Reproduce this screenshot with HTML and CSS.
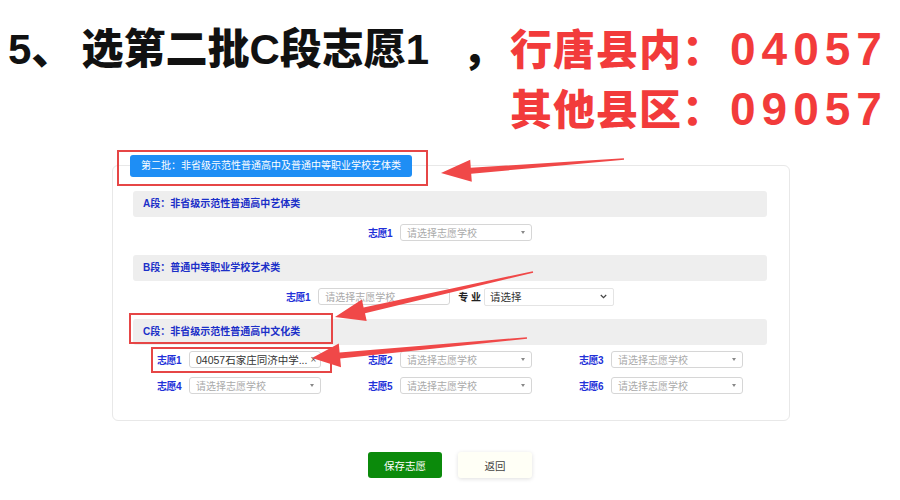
FILE: index.html
```html
<!DOCTYPE html>
<html lang="zh-CN">
<head>
    <meta charset="UTF-8">
    <title>选第二批C段志愿</title>
    <link rel="stylesheet" href="styles.css">
</head>
<body>
    <!-- Step heading -->
    <div class="title">
        <span class="title-lead">5<span class="sep">、</span>选第二批C段志愿1<span class="comma">，</span></span>
        <span class="title-codes">
            <span class="code-line">行唐县内：<span class="num">04057</span></span>
            <span class="code-line">其他县区：<span class="num">09057</span></span>
        </span>
    </div>

    <!-- Volunteer form panel -->
    <div class="panel">
        <div class="batch-tab">第二批：非省级示范性普通高中及普通中等职业学校艺体类</div>

        <div class="seg">
            <div class="seg-head">A段：非省级示范性普通高中艺体类</div>
            <div class="seg-row">
                <span class="pick-label">志愿1</span>
                <div class="pick">请选择志愿学校</div>
            </div>
        </div>

        <div class="seg">
            <div class="seg-head">B段：普通中等职业学校艺术类</div>
            <div class="seg-row">
                <span class="pick-label">志愿1</span>
                <div class="pick plain">请选择志愿学校</div>
                <span class="field-label">专 业</span>
                <div class="major">
                    请选择
                    <svg width="7" height="5" viewBox="0 0 7 5"><polyline points="0.8,1 3.5,3.7 6.2,1" fill="none" stroke="#444" stroke-width="1.2"/></svg>
                </div>
            </div>
        </div>

        <div class="seg">
            <div class="seg-head">C段：非省级示范性普通高中文化类</div>
            <div class="choice-grid">
                <div class="choice"><span class="pick-label">志愿1</span><div class="pick chosen">04057石家庄同济中学...<span class="clear">×</span></div></div>
                <div class="choice"><span class="pick-label">志愿2</span><div class="pick">请选择志愿学校</div></div>
                <div class="choice"><span class="pick-label">志愿3</span><div class="pick">请选择志愿学校</div></div>
                <div class="choice"><span class="pick-label">志愿4</span><div class="pick">请选择志愿学校</div></div>
                <div class="choice"><span class="pick-label">志愿5</span><div class="pick">请选择志愿学校</div></div>
                <div class="choice"><span class="pick-label">志愿6</span><div class="pick">请选择志愿学校</div></div>
            </div>
        </div>
    </div>

    <div class="actions">
        <button class="btn btn-save">保存志愿</button>
        <button class="btn btn-back">返回</button>
    </div>

    <!-- Annotation marks drawn over the screenshot -->
    <svg class="marks" width="900" height="500" viewBox="0 0 900 500">
        <rect x="118" y="151" width="309" height="34" fill="none" stroke="#e64646" stroke-width="2"/>
        <rect x="130" y="314" width="202" height="29" fill="none" stroke="#e64646" stroke-width="2"/>
        <rect x="152" y="348" width="179" height="24" fill="none" stroke="#e64646" stroke-width="2"/>
        <polygon points="441,173 471.8,181.7 471.2,173.7 624.1,159.8 623.9,158.2 470.8,167.7 470.2,159.7" fill="#f04848"/>
        <polygon points="335,317 366.7,321 365,313.2 533.2,272.8 532.8,271.2 363.6,307.4 361.9,299.6" fill="#f04848"/>
        <polygon points="312,358 341,367.3 340.2,358.4 527.1,338.8 526.9,337.2 339.6,352.4 338.8,343.5" fill="#f04848"/>
    </svg>
</body>
</html>
```

FILE: styles.css
```css
/* General styling */
* {
    box-sizing: border-box;
}

body {
    margin: 0;
    width: 900px;
    height: 500px;
    overflow: hidden;
    position: relative;
    background: #fff;
    font-family: "Liberation Sans", "Noto Sans CJK SC", sans-serif;
}

/* Heading */
.title {
    display: flex;
    height: 138px;
    padding: 20px 0 0 8px;
    font-size: 42px;
    font-weight: 900;
    line-height: 59px;
}

.title-lead {
    width: 502px;
    color: #111;
    white-space: nowrap;
}

.title-lead .sep {
    margin-right: 8px;
}

.title-lead .comma {
    margin-left: 33px;
}

.title-codes {
    display: flex;
    flex-direction: column;
    color: #f23b3b;
    letter-spacing: 1px;
    white-space: nowrap;
}

.num {
    font-size: 46px;
    letter-spacing: 6px;
    margin-left: 5px;
}

/* Panel */
.panel {
    display: flex;
    flex-direction: column;
    margin: 27px 110px 0 112px;
    padding: 0 22px 26px 20px;
    border: 1px solid #e8e8e8;
    border-radius: 6px;
}

.batch-tab {
    align-self: flex-start;
    margin: -11px 0 0 -3px;
    height: 22px;
    line-height: 22px;
    padding: 0 11px;
    background: #1e8ef5;
    color: #fff;
    font-size: 10px;
    border-radius: 3px;
}

.seg {
    margin-top: 14px;
}

.seg:first-of-type {
    margin-top: 13px;
}

.seg-head {
    height: 26px;
    line-height: 26px;
    padding-left: 10px;
    background: #eee;
    border-radius: 3px;
    color: #1b2fc8;
    font-size: 10px;
    font-weight: 700;
}

.seg-row {
    display: flex;
    justify-content: center;
    align-items: center;
    height: 17px;
    margin-top: 7px;
}

.pick-label {
    margin-right: 8px;
    color: #2230d8;
    font-size: 10px;
    font-weight: 700;
    letter-spacing: -0.5px;
    white-space: nowrap;
}

.pick {
    display: flex;
    align-items: center;
    justify-content: space-between;
    width: 132px;
    height: 17px;
    padding: 0 6px;
    border: 1px solid #d6d6d6;
    border-radius: 3px;
    background: #fff;
    color: #aaa;
    font-size: 10px;
    white-space: nowrap;
}

.pick::after {
    content: "";
    border-left: 2.5px solid transparent;
    border-right: 2.5px solid transparent;
    border-top: 3px solid #888;
}

.pick.plain::after,
.pick.chosen::after {
    display: none;
}

.pick.chosen {
    justify-content: flex-start;
    color: #333;
    font-size: 10.5px;
}

.pick .clear {
    margin-left: 3px;
    color: #555;
    font-size: 10px;
}

.field-label {
    margin: 0 3px 0 8px;
    color: #222;
    font-size: 10px;
    font-weight: 700;
    white-space: pre;
}

.major {
    display: flex;
    align-items: center;
    justify-content: space-between;
    width: 130px;
    height: 18px;
    padding: 0 6px 0 5px;
    border: 1px solid #e4e4e4;
    border-radius: 2px;
    color: #333;
    font-size: 10.5px;
}

.choice-grid {
    display: grid;
    grid-template-columns: repeat(3, auto);
    justify-content: center;
    column-gap: 47px;
    row-gap: 9px;
    margin-top: 6px;
}

.choice {
    display: flex;
    align-items: center;
    height: 17px;
}

/* Buttons */
.actions {
    display: flex;
    justify-content: center;
    gap: 16px;
    margin-top: 31px;
}

.btn {
    width: 74px;
    height: 26px;
    border: none;
    border-radius: 3px;
    font-family: "Liberation Sans", "Noto Sans CJK SC", sans-serif;
    font-size: 10.5px;
}

.btn-save {
    background: #0b8a0b;
    color: #fff;
}

.btn-back {
    background: #fffff6;
    color: #444;
    box-shadow: 0 1px 4px rgba(0, 0, 0, 0.13);
}

/* Annotation overlay */
.marks {
    position: absolute;
    top: 0;
    left: 0;
    pointer-events: none;
}
```
